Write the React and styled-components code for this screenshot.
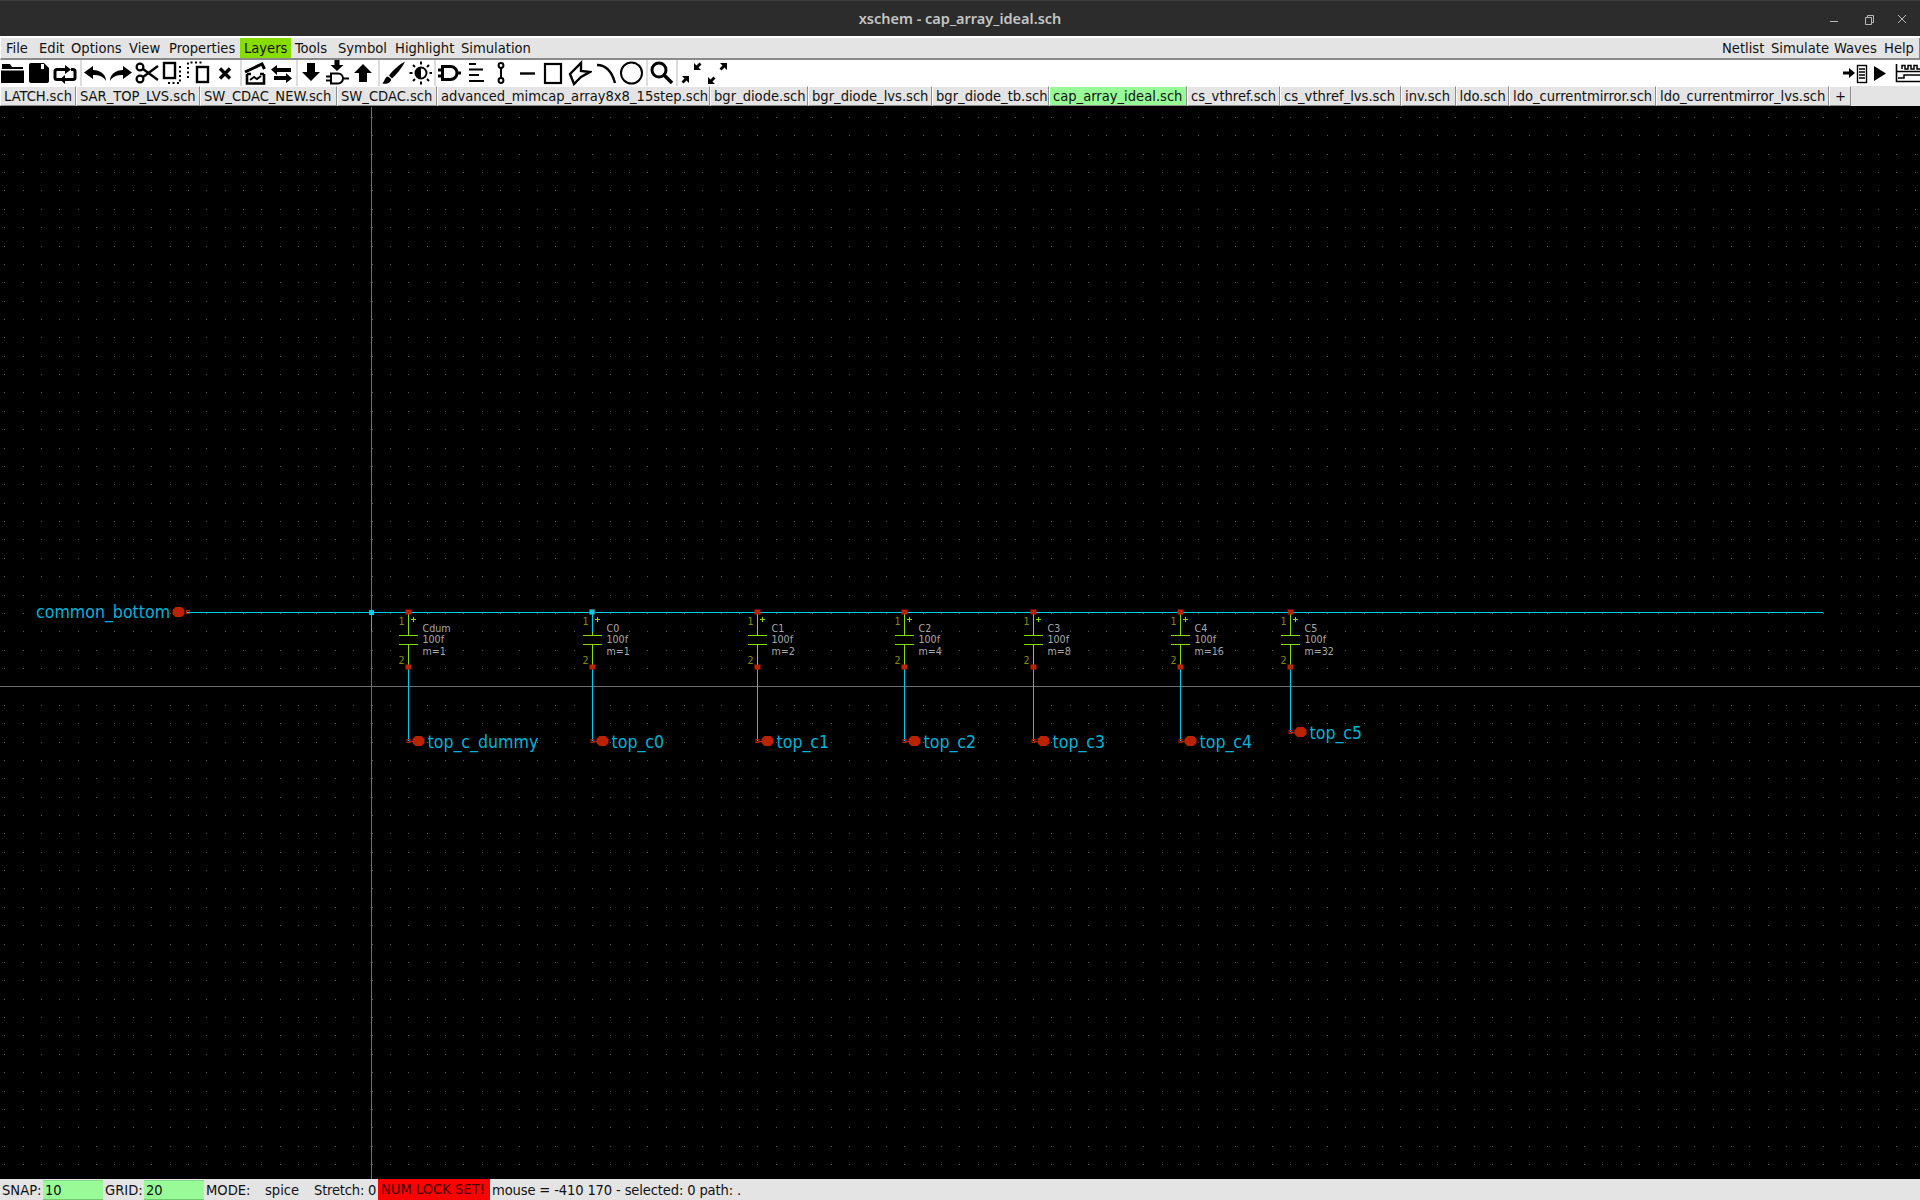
import React from 'react';
import styled, { createGlobalStyle } from 'styled-components';

const Global = createGlobalStyle`
  html, body { margin: 0; padding: 0; background: #000; }
  #root { height: 100vh; }
`;
const UI = `"DejaVu Sans", sans-serif`;

const Window = styled.div`
  height: 1200px; width: 1920px; display: flex; flex-direction: column; overflow: hidden;
  background: #e4e4e4; font-family: ${UI}; font-stretch: condensed; font-size: 14.6px; color: #111;
`;
const TitleBar = styled.header`
  height: 36px; flex: none; background: #2c2c2c; position: relative; padding-bottom: 2px;
  display: flex; align-items: center; justify-content: center; border-top: 1px solid #3c3c3c; box-sizing: border-box;
`;
const Title = styled.h1`
  margin: 0; font: 600 14.5px "Noto Sans", sans-serif; color: #c4c4c4;
`;
const WinControls = styled.div`
  position: absolute; right: 1px; top: 0; display: flex;
`;
const WinBtn = styled.svg`
  width: 34px; height: 36px; stroke: #b8b8b8; fill: none; stroke-width: 1;
`;
const Gap = styled.div`height: 2px; flex: none; background: #fff;`;
const MenuBar = styled.nav`
  height: 22px; flex: none; box-sizing: border-box; display: flex; align-items: center; padding: 0 1px;
  background: #e4e4e4; border-bottom: 2px solid #8a8a8a; border-left: 1px solid #fff; border-right: 1px solid #888;
`;
const Menu = styled.span`
  width: ${p => p.$w}px; box-sizing: border-box; height: 20px; line-height: 20px; padding-left: 4px; white-space: nowrap; overflow: visible;
  background: ${p => (p.$on ? '#88dd00' : 'transparent')};
  ${p => p.$push && 'margin-left: auto;'}
`;
const ToolBar = styled.div`
  height: 26px; flex: none; background: #fff; display: flex; overflow: hidden;
`;
const ToolGroup = styled.div`
  display: flex; height: 26px;
  padding-right: ${p => p.$pad ?? 2}px;
  ${p => !p.$plain && 'border-right: 2px solid #dcdcdc;'}
  ${p => p.$push && 'margin-left: auto;'}
`;
const Icon = styled.svg`
  width: 26px; height: 26px; flex: none; fill: #000; stroke: none; overflow: hidden;
`;
const TabBar = styled.div`
  height: 21px; flex: none; display: flex; background: #e4e4e4; border-bottom: 1px solid #000; box-sizing: border-box;
`;
const Tab = styled.button`
  all: unset; box-sizing: border-box; height: 20px; line-height: 17px; padding: 0 0 3px ${p => p.$pl ?? 3}px; width: ${p => p.$w}px;
  white-space: nowrap; overflow: hidden; font-family: ${UI}; font-stretch: condensed; font-size: 14.6px; color: #111;
  background: ${p => (p.$on ? '#98fb98' : '#e4e4e4')};
  border-top: 1px solid #fff; border-left: 1px solid #fff; border-right: 1px solid #8e8e8e; border-bottom: 1px solid #8e8e8e;
`;
const Canvas = styled.main`
  flex: 1; min-height: 0; background: #000; display: block;
`;
const Sheet = styled.svg`display: block; width: 1920px; height: 1072px;`;
const NetText = styled.text`
  font-family: "DejaVu Sans", sans-serif; font-size: 17.6px; fill: #00b4d8;
`;
const AttrText = styled.text`
  font-family: "DejaVu Sans", sans-serif; font-size: 10.6px; fill: #a8a8a8;
`;
const PinText = styled.text`
  font-family: "DejaVu Sans", sans-serif; font-size: 10.6px; fill: #8a8a00;
`;
const StatusBar = styled.footer`
  height: 21px; flex: none; display: flex; align-items: center; background: #e4e4e4; box-sizing: border-box; white-space: pre;
`;
const StatusText = styled.span`
  margin-left: ${p => p.$ml ?? 0}px; width: ${p => p.$w}px; flex: none; letter-spacing: ${p => p.$ls ?? 0}px;
`;
const Entry = styled.span`
  width: ${p => p.$w ?? 60}px; height: 20px; margin-top: 1px; line-height: 18px; box-sizing: border-box; padding-left: 2px;
  background: #98fb98; flex: none; border-top: 1px solid #88dd88; border-bottom: 1px solid #70c870;
`;
const Alert = styled.span`
  width: 112px; height: 21px; line-height: 20px; flex: none; background: #ff0000; color: #400; padding-left: 3px; box-sizing: border-box;
`;

const Ic = ({ children }) => <Icon viewBox="0 0 26 26">{children}</Icon>;
const S = p => <path fill="none" stroke="#000" {...p} />;

const tools = [
  [
    <><path d="M2 4h8l2 3h11v2H2zM1 10.5h23V23H1z" /></>,
    <><path fillRule="evenodd" d="M3 5a2 2 0 0 1 2-2h13l5 5v13a2 2 0 0 1-2 2H5a2 2 0 0 1-2-2zM15 4h3v5h-3z" /></>,
    <><S strokeWidth="3" d="M13 9.5H5a2 2 0 0 0-2 2v6a2 2 0 0 0 2 2h16a2 2 0 0 0 2-2v-6a2 2 0 0 0-2-2h-2" /><path d="M13 5l6 4.5-6 4.5zM13 15v9l-5-4.5z" /></>,
  ],
  [
    <><path d="M2 12.5 11 6v4c7 0 13 4 13 11-3-5-7-6-13-6v4z" /></>,
    <><path d="M24 12.5 15 6v4C8 10 2 14 2 21c3-5 7-6 13-6v4z" /></>,
    <><S strokeWidth="2.4" d="M9 9 24 20M9 17 24 6" /><circle cx="6" cy="7" r="3.4" fill="none" stroke="#000" strokeWidth="2.2" /><circle cx="6" cy="19" r="3.4" fill="none" stroke="#000" strokeWidth="2.2" /></>,
    <><rect x="4" y="3" width="11" height="15" fill="none" stroke="#000" strokeWidth="2.4" /><S strokeWidth="2" strokeDasharray="2 2.5" d="M20 6V23H8" /></>,
    <><rect x="11" y="7" width="11" height="15" fill="none" stroke="#000" strokeWidth="2.4" /><S strokeWidth="2" strokeDasharray="2 2.5" d="M2 18V2.5H18" /></>,
    <><S strokeWidth="3.4" d="M8 8.5l10 10M18 8.5l-10 10" /></>,
  ],
  [
    <><S strokeWidth="3" d="M3 12 20 4l2.5 5" /><S strokeWidth="2.6" d="M5 14v9.5h17V14" /><S strokeWidth="2.6" d="M5 14h4M18 14h4" /><S strokeWidth="2" d="M8 20l4-3 3 2 4-3" /></>,
    <><path d="M3 9.5 9 5v3h14v4H9v3zM24 18.5 18 23v-3H6v-4h12v-3z" /></>,
  ],
  [
    <><path d="M9 3h8v9h5l-9 9-9-9h5z" /></>,
    <><path d="M10.5 0h5v5h4l-6.5 6-6.5-6h4z" /><S strokeWidth="2" d="M7 13.5h7a5 5 0 0 1 0 10H7zM2 16.5h5M2 20.5h5M19 18.5h6" /></>,
    <><path d="M9 22h8v-9h5l-9-9-9 9h5z" /></>,
  ],
  [
    <><path d="M25 1.5C20 4 12 11 9 15.5l3 3C16 15 22 8 25 1.5zM8 16.5c-3 0-3 4-5.5 7 4.5 1 9-1 8.5-4.5z" /></>,
    <><circle cx="15" cy="13" r="5.5" fill="#fff" stroke="#000" strokeWidth="2" /><path d="M15 7.5a5.5 5.5 0 0 0 0 11z" /><S strokeWidth="2" d="M15 1.5v3M15 21.5v3M3.5 13h3M23.5 13h3M7 5l2 2M21 19l2 2M7 21l2-2M21 7l2-2" /></>,
  ],
  [
    <><S strokeWidth="3" d="M6.5 6.5h8a6.5 6.5 0 0 1 0 13h-8zM2 10h4M2 16h4M21 13h4" /></>,
    <><S strokeWidth="2" d="M7 4h7M7 9.5h14M7 15h10M7 21h15" /></>,
    <><S strokeWidth="2" d="M13 8v10" /><circle cx="13" cy="5.5" r="2.4" fill="none" stroke="#000" strokeWidth="2" /><circle cx="13" cy="20.5" r="2.4" fill="none" stroke="#000" strokeWidth="2" /></>,
    <><S strokeWidth="2.4" d="M6 13.5h15" /></>,
    <><rect x="5" y="4" width="16" height="19" fill="none" stroke="#000" strokeWidth="2.2" /></>,
    <><S strokeWidth="2.4" d="M4 14 15 3v8l9 1-9 5-7 7z" /></>,
    <><S strokeWidth="2.4" d="M5 5c9 0 15 7 18 18" /></>,
    <><circle cx="13.5" cy="13" r="10.5" fill="none" stroke="#000" strokeWidth="2" /></>,
  ],
  [
    <><circle cx="11" cy="10" r="7" fill="none" stroke="#000" strokeWidth="3" /><S strokeWidth="3.6" d="M16 15l8 8" /></>,
  ],
];
const zoomIcons = [
  <><path d="M16 10V3l2.5 2.5 3-3 2 2-3 3L23 10zM11 16v7l-2.5-2.5-3 3-2-2 3-3L4 16z" /></>,
  <><path d="M23 3v7l-2.5-2.5-3 3-2-2 3-3L16 3zM4 24v-7l2.5 2.5 3-3 2 2-3 3L11 24z" /></>,
];
const netIcons = [
  <><path d="M1 11.5h6V8l6 5-6 5v-3.5H1z" /><rect x="15.5" y="5.5" width="9" height="17" fill="none" stroke="#000" strokeWidth="1.4" /><S strokeWidth="1.4" d="M17 9h6M17 12h6M17 15h6M17 18h6" /></>,
  <><path d="M6 6l12 7.5L6 21z" /></>,
  <><S strokeWidth="1.6" d="M2.5 4v18M2 11.5h24M2 21.5h24" /><S strokeWidth="1.5" d="M8 9V5.5h3V9h3V5.5h3V9h3V5.5h3V9h3M4 18h6v-3h16" /></>,
];

const menusL = [['File', 33], ['Edit', 32], ['Options', 58], ['View', 40], ['Properties', 75], ['Layers', 51], ['Tools', 43], ['Symbol', 57], ['Highlight', 66], ['Simulation', 75]];
const menusR = [['Netlist', 49], ['Simulate', 63], ['Waves', 50], ['Help', 38]];
const tabs = [
  ['LATCH.sch', 76], ['SAR_TOP_LVS.sch', 124], ['SW_CDAC_NEW.sch', 137], ['SW_CDAC.sch', 100],
  ['advanced_mimcap_array8x8_15step.sch', 273], ['bgr_diode.sch', 98], ['bgr_diode_lvs.sch', 124], ['bgr_diode_tb.sch', 117],
  ['cap_array_ideal.sch', 138], ['cs_vthref.sch', 93], ['cs_vthref_lvs.sch', 121], ['inv.sch', 54.5], ['ldo.sch', 53.5],
  ['ldo_currentmirror.sch', 147], ['ldo_currentmirror_lvs.sch', 173], ['+', 22],
];

/* schematic scale: 1 xschem unit = 0.9185 px, origin at the axes crossing */
const OX = 371.6, OY = 686.4, U = 0.9185, TOP = 107, H = 1072;
const px = u => OX + u * U;
const dots = (() => {
  let d = '';
  const step = 20 * U;
  for (let i = -21; i < 85; i++)
    for (let j = -32; j < 27; j++) {
      d += `M${Math.round(OX + i * step)} ${Math.round(OY + j * step)}h1v1h-1z`;
    }
  return d;
})();
const caps = [
  { x: 40, n: 'Cdum', m: 1, net: 'top_c_dummy' },
  { x: 240, n: 'C0', m: 1, net: 'top_c0', j: true },
  { x: 420, n: 'C1', m: 2, net: 'top_c1' },
  { x: 580, n: 'C2', m: 4, net: 'top_c2' },
  { x: 720, n: 'C3', m: 8, net: 'top_c3' },
  { x: 880, n: 'C4', m: 16, net: 'top_c4' },
  { x: 1000, n: 'C5', m: 32, net: 'top_c5', y: 732 },
];
const WIRE = '#00ccee', RED = '#bb2200', GREEN = '#88dd00';
const Octagon = ({ x, y }) => (
  <path d={`M${x - 3} ${y - 5}h6l3 3v4l-3 3h-6l-3-3v-4z`} fill={RED} />
);
const Cap = ({ x: ux, n, m, net, y = 741, j }) => {
  const x = Math.round(px(ux)) + 0.5;
  return (
    <g>
      <path d={`M${x} 612V635M${x - 9.5} 635h19M${x - 9.5} 644h19M${x} 644V667M${x + 2.5} 619.5h5M${x + 5} 617v5`} stroke={GREEN} fill="none" shapeRendering="crispEdges" />
      <path d={`M${x} 667V${y}`} stroke={WIRE} fill="none" shapeRendering="crispEdges" />
      <rect x={x - 3} y={609.5} width="6" height="5" fill={RED} />
      <rect x={x - 3} y={664.5} width="6" height="5" fill={RED} />
      <rect x={x - 1.5} y={y - 1.5} width="3" height="3" fill="none" stroke={RED} />
      <path d={`M${x} ${y + 0.5}h5`} stroke={RED} />
      <Octagon x={x + 10} y={y} />
      <PinText x={x - 10} y={625}>1</PinText>
      <PinText x={x - 10} y={664}>2</PinText>
      <AttrText x={x + 14} y={632}>{n}</AttrText>
      <AttrText x={x + 14} y={643}>100f</AttrText>
      <AttrText x={x + 14} y={655}>m={m}</AttrText>
      <NetText x={x + 19} y={y + 7}>{net}</NetText>
      {j && (
        <>
          <path d={`M${x} 612V632`} stroke={WIRE} shapeRendering="crispEdges" />
          <rect x={x - 3} y={609.5} width="5" height="5" fill={WIRE} />
        </>
      )}
    </g>
  );
};

export default function App() {
  return (
    <Window>
      <Global />
      <TitleBar>
        <Title>xschem - cap_array_ideal.sch</Title>
        <WinControls>
          <WinBtn viewBox="0 0 34 36"><path d="M13 20.5h8" /></WinBtn>
          <WinBtn viewBox="0 0 34 36"><path d="M14.5 16.5h6v7h-6zM16.5 16.5v-2h6v7h-2" /></WinBtn>
          <WinBtn viewBox="0 0 34 36"><path d="M13 14l8 8M21 14l-8 8" /></WinBtn>
        </WinControls>
      </TitleBar>
      <Gap />
      <MenuBar>
        {menusL.map(([m, w]) => <Menu key={m} $w={w} $on={m === 'Layers'}>{m}</Menu>)}
        {menusR.map(([m, w], i) => <Menu key={m} $w={w} $push={i === 0}>{m}</Menu>)}
      </MenuBar>
      <ToolBar>
        {tools.map((g, i) => (
          <ToolGroup key={i}>
            {g.map((t, k) => <Ic key={k}>{t}</Ic>)}
          </ToolGroup>
        ))}
        <ToolGroup $plain>
          {zoomIcons.map((t, k) => <Ic key={k}>{t}</Ic>)}
        </ToolGroup>
        <ToolGroup $plain $push $pad={0}>
          {netIcons.map((t, k) => <Ic key={k}>{t}</Ic>)}
        </ToolGroup>
      </ToolBar>
      <TabBar>
        {tabs.map(([t, w]) => <Tab key={t} $w={w} $pl={t === '+' ? 5 : 3} $on={t === 'cap_array_ideal.sch'}>{t}</Tab>)}
      </TabBar>
      <Canvas>
        <Sheet viewBox={`0 ${TOP} 1920 ${H}`}>
          <path d={dots} fill="#5c5c5c" shapeRendering="crispEdges" />
          <path d={`M371.5 ${TOP}V${TOP + H}M0 686.5H1920`} stroke="#6e6e6e" fill="none" shapeRendering="crispEdges" />
          <path d="M186 612.5H1823M371.5 612V631" stroke={WIRE} fill="none" shapeRendering="crispEdges" />
          <rect x="369" y="610" width="5" height="5" fill={WIRE} />
          <Octagon x={178.5} y={612} />
          <rect x="186.5" y="610.5" width="3" height="3" fill="none" stroke={RED} />
          <NetText x={36} y={618}>common_bottom</NetText>
          {caps.map(c => <Cap key={c.n} {...c} />)}
        </Sheet>
      </Canvas>
      <StatusBar>
        <StatusText $ml={2} $w={41}>SNAP:</StatusText>
        <Entry>10</Entry>
        <StatusText $ml={2} $w={39}>GRID:</StatusText>
        <Entry>20</Entry>
        <StatusText $ml={2} $w={57}>MODE:</StatusText>
        <StatusText $ml={2} $w={49}>spice</StatusText>
        <StatusText $w={64} $ls={-0.2}>Stretch: 0</StatusText>
        <Alert>NUM LOCK SET!</Alert>
        <StatusText $ml={2} $ls={-0.15}>mouse = -410 170 - selected: 0 path: .</StatusText>
      </StatusBar>
    </Window>
  );
}
